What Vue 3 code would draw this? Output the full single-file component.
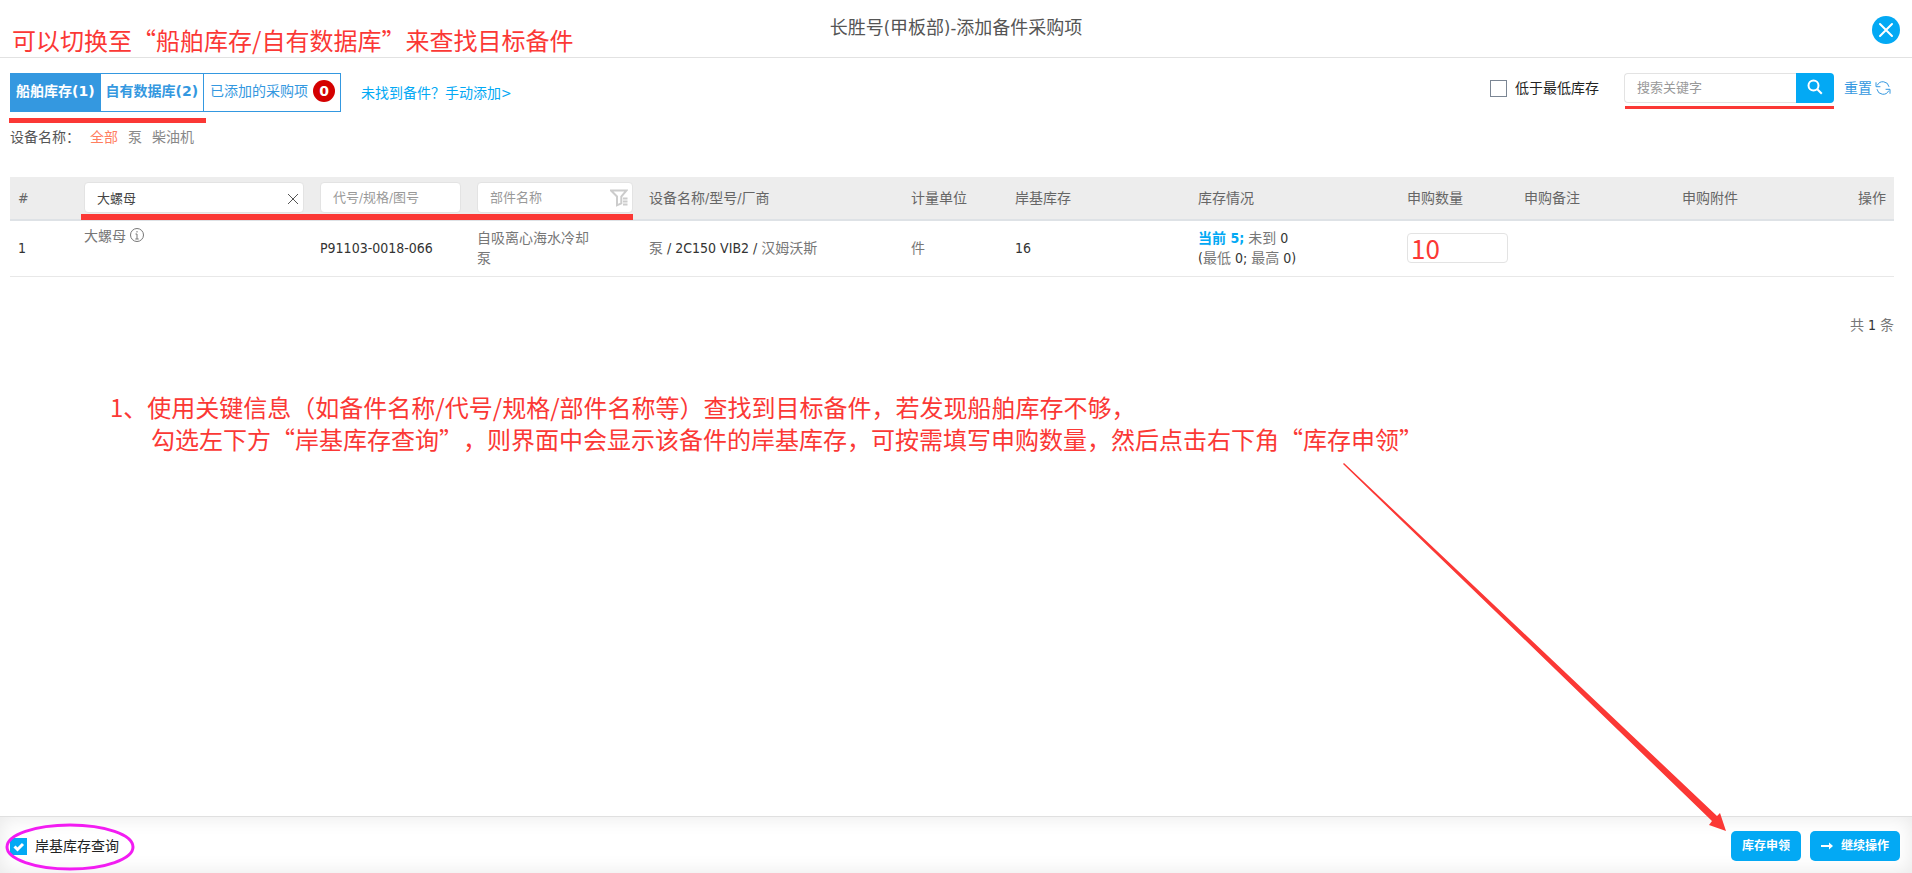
<script setup>
import { ref } from 'vue'

const tabs = [
  { label: '船舶库存', count: 1 },
  { label: '自有数据库', count: 2 },
]
const activeTab = ref(0)
const addedCount = ref(0)
const devices = ['全部', '泵', '柴油机']
const activeDevice = ref('全部')
const belowMin = ref(false)
const shoreQuery = ref(true)
const keyword = ref('')
const partName = ref('大螺母')
const partCode = ref('')
const component = ref('')
const quantity = ref('10')
</script>

<template>
  <div class="page">
    <header class="header">
      <h1 class="title">长胜号(甲板部)-添加备件采购项</h1>
      <button class="close" type="button" aria-label="关闭">
        <svg viewBox="0 0 28 28" width="28" height="28"><path d="M8 8l12 12M20 8l-12 12" /></svg>
      </button>
      <p class="note note-top">可以切换至“船舶库存/自有数据库”来查找目标备件</p>
    </header>

    <main class="main">
      <div class="toolbar">
        <div class="tabs">
          <button
            v-for="(tab, i) in tabs"
            :key="tab.label"
            type="button"
            class="tab"
            :class="{ active: i === activeTab }"
            @click="activeTab = i"
          >{{ tab.label }}({{ tab.count }})</button>
          <button type="button" class="tab added">已添加的采购项<span class="badge">{{ addedCount }}</span></button>
          <span class="mark mark-tabs"></span>
        </div>
        <a class="manual" href="#">未找到备件？手动添加&gt;</a>
        <div class="tools">
          <label class="check low">
            <span class="box"><input v-model="belowMin" type="checkbox" /><svg v-if="belowMin" viewBox="0 0 17 17"><path d="M4.500 8.500l3 3 5.500-5.500" /></svg></span>
            低于最低库存
          </label>
          <div class="search">
            <input v-model="keyword" type="text" placeholder="搜索关键字" aria-label="搜索关键字" />
            <button type="button" aria-label="搜索">
              <svg viewBox="0 0 16 16" width="16" height="16"><circle cx="6.500" cy="6.500" r="5" /><path d="M10.300 10.300l4.500 4.500" /></svg>
            </button>
            <span class="mark mark-search"></span>
          </div>
          <a class="reset" href="#">重置
            <svg viewBox="0 0 16 16" width="16" height="16">
              <path d="M14 6.800A6.200 6.200 0 0 0 2.300 5.300M1 2.300v4.400h4.400" />
              <path d="M2 9.200a6.200 6.200 0 0 0 11.700 1.500M15 13.700V9.300h-4.400" />
            </svg>
          </a>
        </div>
      </div>

      <div class="devices">
        <span class="devices-label">设备名称：</span>
        <a v-for="d in devices" :key="d" href="#" :class="{ active: d === activeDevice }" @click.prevent="activeDevice = d">{{ d }}</a>
      </div>

      <div class="table-wrap">
        <table>
          <colgroup>
            <col class="c-no" /><col class="c-name" /><col class="c-code" /><col class="c-comp" />
            <col class="c-dev" /><col class="c-unit" /><col class="c-shore" /><col class="c-stock" />
            <col class="c-qty" /><col class="c-remark" /><col class="c-file" />
          </colgroup>
          <thead>
            <tr>
              <th>#</th>
              <th>
                <div class="field">
                  <input v-model="partName" class="filled" type="text" aria-label="备件名称" />
                  <button type="button" aria-label="清空" @click="partName = ''">
                    <svg viewBox="0 0 12 12" width="12" height="12"><path d="M1 1l10 10M11 1L1 11" /></svg>
                  </button>
                </div>
              </th>
              <th><div class="field"><input v-model="partCode" type="text" placeholder="代号/规格/图号" aria-label="代号/规格/图号" /></div></th>
              <th>
                <div class="field">
                  <input v-model="component" type="text" placeholder="部件名称" aria-label="部件名称" />
                  <svg class="filter" viewBox="0 0 18 18" width="18" height="18">
                    <path d="M1 1.500h15.500l-5.200 6v6.800l-4.300 2V7.500z" />
                    <path d="M13 9.500h4.500M13 12.500h4.500M13 15.500h4.500" />
                  </svg>
                </div>
              </th>
              <th>设备名称/型号/厂商</th>
              <th>计量单位</th>
              <th>岸基库存</th>
              <th>库存情况</th>
              <th>申购数量</th>
              <th>申购备注</th>
              <th><span class="split"><span>申购附件</span><span>操作</span></span></th>
            </tr>
          </thead>
          <tbody>
            <tr>
              <td>1</td>
              <td class="name">
                <span>大螺母</span>
                <svg viewBox="0 0 16 16" width="16" height="16"><circle cx="8" cy="8" r="6.500" /><path d="M8 4v1.500M6.500 7H8v5M6.300 12h3.400" /></svg>
              </td>
              <td>P91103-0018-066</td>
              <td class="wrap"><span class="cjk">自吸离心海水冷却泵</span></td>
              <td><span class="cjk">泵</span> / 2C150 VIB2 / <span class="cjk">汉姆沃斯</span></td>
              <td><span class="cjk">件</span></td>
              <td>16</td>
              <td>
                <b>当前 5;</b> <span class="cjk">未到</span> 0<br />
                (<span class="cjk">最低</span> 0; <span class="cjk">最高</span> 0)
              </td>
              <td class="qty"><input v-model="quantity" type="text" aria-label="申购数量" /></td>
              <td></td>
              <td></td>
            </tr>
          </tbody>
        </table>
        <span class="mark mark-filters"></span>
      </div>
      <p class="total"><span class="cjk">共</span> 1 <span class="cjk">条</span></p>

      <p class="note note-steps">1、使用关键信息（如备件名称/代号/规格/部件名称等）查找到目标备件，若发现船舶库存不够，<br /><span>勾选左下方“岸基库存查询”，则界面中会显示该备件的岸基库存，可按需填写申购数量，然后点击右下角“库存申领”</span></p>
    </main>

    <footer class="footer">
      <label class="check">
        <span class="box"><input v-model="shoreQuery" type="checkbox" /><svg v-if="shoreQuery" viewBox="0 0 17 17"><path d="M4.500 8.500l3 3 5.500-5.500" /></svg></span>
        岸基库存查询
      </label>
      <div class="actions">
        <button type="button">库存申领</button>
        <button type="button">
          <svg viewBox="0 0 12 10" width="12" height="10"><path class="line" d="M0 5h9" /><path class="tip" d="M8 1.500L12 5 8 8.500z" /></svg>
          继续操作
        </button>
      </div>
      <svg class="ring" viewBox="0 0 130 48"><ellipse cx="65" cy="24" rx="63" ry="22" /></svg>
      <svg class="arrow" viewBox="0 0 384 369"><path d="M0 1L1 0L374 353L377 350L383 368L366 362L369 358z" /></svg>
    </footer>
  </div>
</template>

<style>
body {
  background: #fff;
}
</style>

<style scoped>
.page {
  --blue: #03a9f4;
  --link: #3498e0;
  --red: #fb3835;
  display: flex;
  flex-direction: column;
  min-height: 100vh;
  font-family: "DejaVu Sans Condensed", "Noto Sans CJK SC", sans-serif;
  font-size: 14px;
  line-height: 20px;
  color: #333;
}
* {
  box-sizing: border-box;
}
h1, p {
  margin: 0;
}
button, input {
  font: inherit;
  color: inherit;
  margin: 0;
}
button {
  border: 0;
  padding: 0;
  cursor: pointer;
}
a {
  text-decoration: none;
}
svg {
  display: block;
  fill: none;
  stroke: currentColor;
  flex: none;
}
.header {
  position: relative;
  display: flex;
  align-items: center;
  justify-content: center;
  height: 58px;
  padding-bottom: 2px;
  border-bottom: 1px solid #e2e2e2;
}
.title {
  font-size: 18px;
  line-height: 26px;
  font-weight: 400;
  color: #555;
}
.close {
  position: absolute;
  top: 16px;
  right: 12px;
  border-radius: 50%;
  background: var(--blue);
  color: #fff;
}
.close svg {
  stroke-width: 2;
  stroke-linecap: round;
}
.note {
  position: absolute;
  font-family: "Noto Sans CJK SC", sans-serif;
  font-size: 24px;
  line-height: 32px;
  color: var(--red);
  white-space: nowrap;
  text-spacing-trim: space-all;
}
.note-top {
  left: 12px;
  top: 24px;
}
.note-steps {
  left: 110px;
  top: 333px;
}
.note-steps span {
  margin-left: 41px;
}
.mark {
  position: absolute;
  background: var(--red);
}
.main {
  position: relative;
  flex: 1;
  padding: 15px 18px 0 10px;
}
.toolbar {
  display: flex;
  align-items: flex-start;
}
.tabs {
  position: relative;
  display: flex;
  height: 39px;
  border: 1px solid var(--link);
}
.tab {
  padding: 0 5px 4px;
  background: #fff;
  color: var(--link);
  font-family: "DejaVu Sans", "Noto Sans CJK SC", sans-serif;
  font-weight: 700;
}
.tab + .tab {
  border-left: 1px solid var(--link);
}
.tab.active {
  background: var(--link);
  color: #fff;
}
.tab.added {
  display: flex;
  align-items: center;
  gap: 5px;
  padding-left: 6px;
  font-weight: 400;
}
.badge {
  width: 22px;
  height: 22px;
  border-radius: 50%;
  background: #d40000;
  color: #fff;
  font-weight: 700;
  line-height: 22px;
  text-align: center;
}
.mark-tabs {
  left: -2px;
  top: 44px;
  width: 197px;
  height: 5px;
}
.manual {
  margin: 10px 0 0 20px;
  color: var(--blue);
}
.tools {
  display: flex;
  align-items: center;
  height: 30px;
  margin-left: auto;
}
.check {
  display: flex;
  align-items: center;
  gap: 8px;
  color: #222;
}
.low {
  margin-right: 25px;
}
.box {
  position: relative;
  width: 17px;
  height: 17px;
}
.box input {
  display: block;
  appearance: none;
  width: 17px;
  height: 17px;
  border: 1px solid #7b8694;
  background: #fff;
}
.box input:checked {
  border-color: var(--blue);
  background: var(--blue);
}
.box svg {
  position: absolute;
  inset: 0;
  color: #fff;
  stroke-width: 3;
  pointer-events: none;
}
.search {
  position: relative;
  display: flex;
  height: 30px;
}
.search input {
  width: 172px;
  padding: 0 12px;
  border: 1px solid #e3e3e3;
  border-right: 0;
  border-radius: 4px 0 0 4px;
  font-size: 13px;
}
.search button {
  display: grid;
  place-items: center;
  width: 38px;
  padding-bottom: 3px;
  border-radius: 0 4px 4px 0;
  background: var(--blue);
  color: #fff;
}
.search svg {
  stroke-width: 2;
}
.mark-search {
  left: 1px;
  right: 0;
  top: 33px;
  height: 3px;
}
input::placeholder {
  color: #999;
  opacity: 1;
}
.reset {
  display: flex;
  align-items: center;
  gap: 3px;
  margin: 0 3px 0 10px;
  color: var(--link);
}
.devices {
  display: flex;
  gap: 10px;
  margin-top: 15px;
}
.devices-label {
  color: #555;
}
.devices a {
  color: #888;
}
.devices a.active {
  color: #ff7e5f;
}
.table-wrap {
  position: relative;
  margin-top: 30px;
}
table {
  width: 100%;
  table-layout: fixed;
  border-collapse: separate;
  border-spacing: 0;
}
.c-no { width: 66px; }
.c-name { width: 236px; }
.c-code { width: 157px; }
.c-comp { width: 172px; }
.c-dev { width: 262px; }
.c-unit { width: 104px; }
.c-shore { width: 183px; }
.c-stock { width: 209px; }
.c-qty { width: 117px; }
.c-remark { width: 158px; }
.c-file { width: 220px; }
th {
  height: 44px;
  padding: 0 8px 1px;
  border-bottom: 2px solid #dee2e6;
  background: #ededed;
  color: #666;
  font-weight: 400;
  text-align: left;
}
.field {
  position: relative;
}
.field input {
  display: block;
  width: 100%;
  height: 31px;
  padding: 0 12px;
  border: 1px solid #e3e3e3;
  border-radius: 4px;
  background: #fff;
  font-size: 13px;
}
.field .filled {
  color: #444;
}
.field button {
  position: absolute;
  right: 5px;
  top: 11px;
  background: none;
  color: #555;
}
.filter {
  position: absolute;
  right: 5px;
  top: 7px;
  color: #ccc;
  stroke-width: 2;
}
.split {
  display: flex;
  justify-content: space-between;
}
.mark-filters {
  left: 3.77%;
  top: 37px;
  width: 29.3%;
  height: 6px;
}
td {
  height: 56px;
  padding: 6px 8px 8px;
  border-bottom: 1px solid #e8e8e8;
}
.cjk {
  color: #777;
}
.name {
  padding-top: 5px;
  vertical-align: top;
  color: #777;
}
.name svg {
  display: inline-block;
  margin-left: 1px;
  vertical-align: -2px;
}
.name span {
  margin-right: 2px;
}
.wrap {
  padding-right: 48px;
}
td b {
  color: var(--blue);
}
.qty {
  padding-top: 0;
  padding-bottom: 2px;
}
.qty input {
  display: block;
  width: 100%;
  height: 30px;
  padding: 0 3px;
  border: 1px solid #e3e3e3;
  border-radius: 4px;
  font-family: "Noto Sans CJK SC", sans-serif;
  font-size: 26px;
  line-height: 28px;
  color: var(--red);
}
.total {
  margin-top: 38px;
  text-align: right;
}
.footer {
  position: relative;
  display: flex;
  align-items: center;
  justify-content: space-between;
  height: 57px;
  padding: 2px 12px 0 10px;
  border-top: 1px solid #e0e0e0;
  background: #fff;
  box-shadow: inset 0 0 20px #e8e8e8;
}
.actions {
  display: flex;
  gap: 9px;
}
.actions button {
  display: flex;
  align-items: center;
  gap: 8px;
  height: 30px;
  padding: 0 11px;
  border-radius: 5px;
  background: var(--blue);
  color: #fff;
  font-size: 12px;
  font-weight: 700;
}
.actions .line {
  stroke-width: 2;
}
.actions .tip {
  fill: currentColor;
  stroke: none;
}
.ring {
  position: absolute;
  left: 5px;
  top: 6px;
  width: 130px;
  height: 48px;
  color: #f21cf2;
  stroke-width: 3;
  pointer-events: none;
}
.arrow {
  position: absolute;
  right: 185px;
  bottom: 41px;
  width: 384px;
  height: 369px;
  fill: var(--red);
  stroke: none;
  pointer-events: none;
}
</style>
